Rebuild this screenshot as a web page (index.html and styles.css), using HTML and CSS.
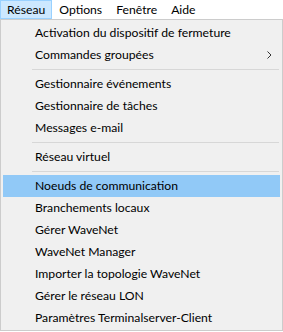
FILE: index.html
```html
<!DOCTYPE html>
<html lang="fr">
<head>
    <meta charset="UTF-8">
    <title>Réseau</title>
    <link rel="stylesheet" href="styles.css">
</head>
<body>
    <div class="menubar">
        <div class="menu-title open">Réseau</div>
        <div class="menu-title">Options</div>
        <div class="menu-title">Fenêtre</div>
        <div class="menu-title">Aide</div>
    </div>

    <div class="dropdown">
        <div class="item">Activation du dispositif de fermeture</div>
        <div class="item">Commandes groupées
            <svg class="arrow" width="5" height="8" viewBox="0 0 5 8">
                <path d="M0.5 0.5 L4 4 L0.5 7.5" fill="none" stroke="#333" stroke-width="1"/>
            </svg>
        </div>
        <div class="separator"></div>
        <div class="item">Gestionnaire événements</div>
        <div class="item">Gestionnaire de tâches</div>
        <div class="item">Messages e-mail</div>
        <div class="separator"></div>
        <div class="item">Réseau virtuel</div>
        <div class="separator"></div>
        <div class="item active">Noeuds de communication</div>
        <div class="item">Branchements locaux</div>
        <div class="item">Gérer WaveNet</div>
        <div class="item">WaveNet Manager</div>
        <div class="item">Importer la topologie WaveNet</div>
        <div class="item">Gérer le réseau LON</div>
        <div class="item">Paramètres Terminalserver-Client</div>
    </div>
</body>
</html>
```

FILE: styles.css
```css
body {
    font-family: Lato, "Noto Sans", Arial, sans-serif;
    font-size: 12.2px;
    color: #000;
    background-color: white;
    margin: 0;
    padding: 0;
}
.menubar {
    display: flex;
    height: 19px;
    background-color: white;
}
.menu-title {
    padding: 0 6px;
    line-height: 17px;
    border: 1px solid transparent;
}
.menu-title.open {
    background-color: #cce8ff;
    border-color: #99d1ff;
}
.dropdown {
    width: 283px;
    background-color: #f0f0f0;
    border: 1px solid #cccccc;
    padding: 2px 2px 1px 2px;
    box-sizing: border-box;
}
.item {
    height: 22px;
    line-height: 22px;
    padding-left: 32px;
    display: flex;
    align-items: center;
    justify-content: space-between;
}
.item.active {
    background-color: #91c9f7;
}
.arrow {
    margin-right: 8px;
}
.separator {
    height: 7px;
}
.separator::after {
    content: '';
    display: block;
    margin-left: 29px;
    margin-right: 1px;
    padding-top: 3px;
    border-bottom: 1px solid #d7d7d7;
}
```
